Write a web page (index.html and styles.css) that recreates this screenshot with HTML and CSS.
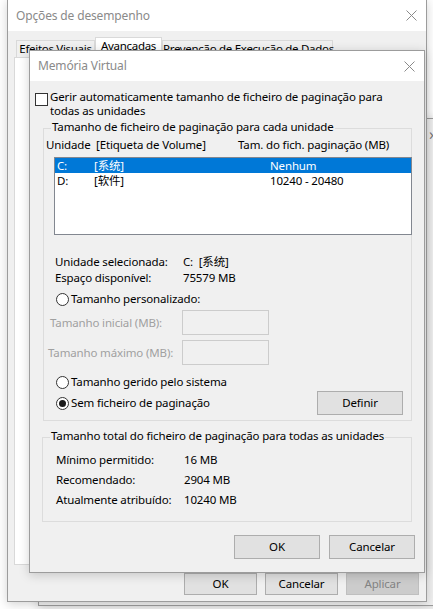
FILE: index.html
```html
<!DOCTYPE html>
<html lang="pt">
<head>
  <meta charset="UTF-8">
  <title>Memória Virtual</title>
  <link rel="stylesheet" href="styles.css">
</head>
<body>
  <div class="desktop">
    <!-- janela por trás -->
    <div class="win win-back">
      <span class="chevron">›</span>
    </div>

    <!-- Opções de desempenho -->
    <div class="win win-outer">
      <div class="titlebar">
        <span class="title">Opções de desempenho</span>
        <svg class="close" width="11" height="11" viewBox="0 0 11 11"><path d="M0.5 0.5 L10.5 10.5 M10.5 0.5 L0.5 10.5" stroke="#8a8a8a" stroke-width="1" fill="none"/></svg>
      </div>
      <div class="outer-body">
        <div class="tabs">
          <div class="tab tab-visual">Efeitos Visuais</div>
          <div class="tab tab-adv active">Avançadas</div>
          <div class="tab tab-dep">Prevenção de Execução de Dados</div>
        </div>
        <div class="tab-panel"></div>
        <div class="outer-buttons">
          <div class="btn btn-sm">OK</div>
          <div class="btn btn-sm">Cancelar</div>
          <div class="btn btn-sm disabled">Aplicar</div>
        </div>
      </div>
    </div>

    <!-- Memória Virtual -->
    <div class="win win-inner">
      <div class="titlebar">
        <span class="title">Memória Virtual</span>
        <svg class="close" width="11" height="11" viewBox="0 0 11 11"><path d="M0.5 0.5 L10.5 10.5 M10.5 0.5 L0.5 10.5" stroke="#8a8a8a" stroke-width="1" fill="none"/></svg>
      </div>
      <div class="inner-body">
        <div class="auto-row">
          <span class="checkbox"></span>
          <span class="auto-text">Gerir automaticamente tamanho de ficheiro de paginação para<br>todas as unidades</span>
        </div>

        <div class="group group-drives">
          <div class="group-title">Tamanho de ficheiro de paginação para cada unidade</div>
          <div class="list-head">
            <span class="h-drive">Unidade</span>
            <span class="h-label">[Etiqueta de Volume]</span>
            <span>Tam. do fich. paginação (MB)</span>
          </div>
          <div class="listbox">
            <div class="list-row selected">
              <span class="c-drive">C:</span>
              <span class="c-label">[系统]</span>
              <span>Nenhum</span>
            </div>
            <div class="list-row">
              <span class="c-drive">D:</span>
              <span class="c-label">[软件]</span>
              <span>10240 - 20480</span>
            </div>
          </div>

          <div class="info first">
            <span class="info-key">Unidade selecionada:</span>
            <span>C:&nbsp; [系统]</span>
          </div>
          <div class="info">
            <span class="info-key">Espaço disponível:</span>
            <span>75579 MB</span>
          </div>

          <div class="radio-row custom">
            <span class="radio"></span>
            <span>Tamanho personalizado:</span>
          </div>
          <div class="field first">
            <span class="field-label">Tamanho inicial (MB):</span>
            <span class="input"></span>
          </div>
          <div class="field">
            <span class="field-label max">Tamanho máximo (MB):</span>
            <span class="input"></span>
          </div>

          <div class="radio-row system">
            <span class="radio"></span>
            <span>Tamanho gerido pelo sistema</span>
          </div>
          <div class="radio-row none">
            <span class="radio checked"></span>
            <span>Sem ficheiro de paginação</span>
            <div class="btn btn-define">Definir</div>
          </div>
        </div>

        <div class="group group-total">
          <div class="group-title">Tamanho total do ficheiro de paginação para todas as unidades</div>
          <div class="total first">
            <span class="total-key">Mínimo permitido:</span>
            <span>16 MB</span>
          </div>
          <div class="total">
            <span class="total-key">Recomendado:</span>
            <span>2904 MB</span>
          </div>
          <div class="total">
            <span class="total-key">Atualmente atribuído:</span>
            <span>10240 MB</span>
          </div>
        </div>

        <div class="inner-buttons">
          <div class="btn">OK</div>
          <div class="btn">Cancelar</div>
        </div>
      </div>
    </div>
  </div>
</body>
</html>
```

FILE: styles.css
```css
body {
  margin: 0;
  background-color: #fff;
  font-family: 'Noto Sans', 'Noto Sans CJK SC', sans-serif;
  font-size: 11.5px;
  letter-spacing: -0.15px;
  line-height: 14px;
  color: #000;
}

.desktop {
  position: relative;
  width: 433px;
  height: 609px;
  overflow: hidden;
}

/* janelas */

.win {
  position: absolute;
  box-sizing: border-box;
  background-color: #f0f0f0;
  border: 1px solid #9c9c9c;
  box-shadow: 0 2px 10px rgba(0, 0, 0, 0.18);
}

.win-back {
  left: 38px;
  top: 118px;
  width: 430px;
  height: 488px;
}

.chevron {
  position: absolute;
  left: 390px;
  top: 8px;
  color: #777;
  font-size: 16px;
}

.win-outer {
  left: 7px;
  top: -1px;
  width: 420px;
  height: 603px;
}

.win-inner {
  left: 29px;
  top: 50px;
  width: 396px;
  height: 523px;
}

.titlebar {
  height: 31px;
  background-color: #fff;
  display: flex;
  align-items: center;
  justify-content: space-between;
  padding: 0 9px 0 8px;
}

.win-inner .titlebar {
  height: 30px;
}

.title {
  color: #8a8a8a;
  font-size: 12px;
}

/* opções de desempenho */

.outer-body {
  padding: 6px 7px 0 6px;
}

.tabs {
  display: flex;
  height: 20px;
  align-items: flex-end;
  padding-left: 2px;
}

.tab {
  box-sizing: border-box;
  height: 17px;
  border: 1px solid #d9d9d9;
  border-bottom: none;
  line-height: 15px;
  text-align: center;
  letter-spacing: -0.3px;
  white-space: nowrap;
}

.tab-visual {
  width: 79px;
}

.tab-adv {
  width: 67px;
}

.tab-dep {
  width: 171px;
}

.tab.active {
  height: 20px;
  background-color: #fff;
  line-height: 16px;
}

.tab-panel {
  height: 506px;
  background-color: #fff;
  border: 1px solid #d9d9d9;
}

.outer-buttons {
  display: flex;
  justify-content: flex-end;
  gap: 8px;
  margin-top: 8px;
}

/* botões */

.btn {
  box-sizing: border-box;
  width: 86px;
  height: 24px;
  background-color: #e1e1e1;
  border: 1px solid #adadad;
  display: flex;
  align-items: center;
  justify-content: center;
}

.btn-sm {
  width: 73px;
  height: 22px;
}

.btn.disabled {
  background-color: #cccccc;
  border-color: #bfbfbf;
  color: #838383;
}

/* memória virtual */

.inner-body {
  padding-left: 5px;
}

.auto-row {
  display: flex;
  margin-top: 9px;
}

.checkbox {
  box-sizing: border-box;
  width: 13px;
  height: 13px;
  margin: 3px 2px 0 0;
  border: 1px solid #333;
  background-color: #fff;
  flex-shrink: 0;
}

.group {
  border: 1px solid #dcdcdc;
}

.group-drives {
  margin: 10px 12px 0 8px;
  padding-bottom: 5px;
}

.group-total {
  margin: 16px 12px 0 7px;
  padding-bottom: 11px;
}

.group-title {
  width: max-content;
  margin: -9px 0 0 7px;
  padding: 0 1px;
  background-color: #f0f0f0;
}

.list-head {
  display: flex;
  margin-top: 4px;
  padding-left: 2px;
}

.h-drive {
  width: 50px;
}

.h-label {
  width: 142px;
}

.listbox {
  box-sizing: border-box;
  height: 78px;
  margin: 5px -1px 0 10px;
  border: 1px solid #828790;
  background-color: #fff;
}

.list-row {
  display: flex;
  height: 15px;
  line-height: 15px;
  padding-left: 2px;
}

.list-row.selected {
  background-color: #0078d7;
  color: #fff;
}

.c-drive {
  width: 37px;
}

.c-label {
  width: 176px;
}

.info {
  display: flex;
  height: 16px;
  line-height: 16px;
  padding-left: 11px;
}

.info.first {
  margin-top: 19px;
}

.info-key {
  width: 128px;
}

.radio-row {
  display: flex;
  align-items: center;
  height: 16px;
  padding-left: 12px;
}

.radio {
  box-sizing: border-box;
  width: 13px;
  height: 13px;
  margin-right: 2px;
  border: 1px solid #333;
  border-radius: 50%;
  background-color: #fff;
  position: relative;
}

.radio.checked::after {
  content: '';
  position: absolute;
  left: 2px;
  top: 2px;
  width: 7px;
  height: 7px;
  border-radius: 50%;
  background-color: #1a1a1a;
}

.radio-row.custom {
  margin-top: 5px;
}

.radio-row.system {
  margin-top: 9px;
}

.radio-row.none {
  height: 24px;
  margin-top: 1px;
}

.btn-define {
  margin-left: auto;
  margin-right: 8px;
}

.field {
  display: flex;
  align-items: center;
  height: 25px;
  margin-top: 5px;
  padding-left: 6px;
  color: #a0a0a0;
}

.field.first {
  margin-top: 3px;
}

.field-label {
  width: 132px;
}

.field-label.max {
  margin-left: -2px;
  width: 134px;
}

.input {
  box-sizing: border-box;
  width: 87px;
  height: 25px;
  border: 1px solid #cccccc;
  background-color: #f0f0f0;
}

.total {
  display: flex;
  height: 20px;
  line-height: 20px;
  padding-left: 13px;
}

.total.first {
  margin-top: 7px;
}

.total-key {
  width: 128px;
}

.inner-buttons {
  display: flex;
  justify-content: flex-end;
  gap: 9px;
  margin-top: 13px;
  padding-right: 9px;
}
```
